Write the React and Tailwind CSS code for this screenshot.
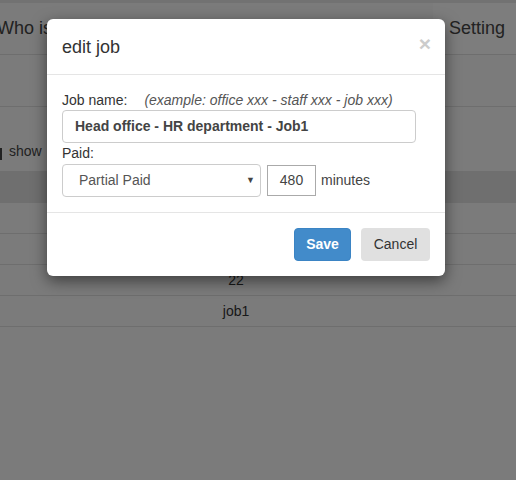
import React from 'react';

const font = { fontFamily: '"Liberation Sans", Arial, sans-serif' };

const App = () => {
  return (
    <div className="relative w-[516px] h-[480px] overflow-hidden bg-[#f6f6f6] text-[#333]" style={font}>
      {/* Page behind the modal */}
      <div className="h-[3px] bg-[#e4e4e4]" />
      <div className="flex h-[52px] border-b border-[#dddddd]">
        <div className="flex-1 flex items-center text-[18px] text-[#444] -ml-[3px]">Who is</div>
        <div className="w-[83px] bg-[#fafafa] flex items-center pl-[16px] text-[18px] text-[#444]">Setting</div>
      </div>
      <div className="h-[52px] border-b border-[#dddddd]" />
      <div className="h-[64px] flex items-end pb-[9px] text-[14px] text-[#444]">
        <span className="w-[2px] h-[12px] bg-[#444] mr-[7px] mb-[2px]" />
        <span>show</span>
      </div>
      <div className="h-[32px] bg-[#dedede]" />
      <div className="h-[31px] border-b border-[#dddddd]" />
      <div className="h-[31px] border-b border-[#dddddd]" />
      <div className="h-[31px] border-b border-[#dddddd] flex items-center">
        <span className="w-[472px] text-center text-[14px]">22</span>
      </div>
      <div className="h-[31px] border-b border-[#dddddd] flex items-center">
        <span className="w-[472px] text-center text-[14px]">job1</span>
      </div>

      {/* Backdrop */}
      <div className="absolute inset-0 bg-black/50" />

      {/* Modal */}
      <div className="absolute left-[47px] top-[19px] w-[398px] bg-white rounded-[6px] shadow-[0_5px_15px_rgba(0,0,0,0.5)]">
        <div className="flex items-center justify-between px-[15px] h-[56px] border-b border-[#e5e5e5]">
          <h4 className="text-[18px] text-[#333] leading-[26px]">edit job</h4>
          <span className="text-[21px] font-bold text-[#cccccc] leading-none -mr-[1px] -mt-[6px]">×</span>
        </div>

        <div className="px-[15px] pt-[15px] pb-[15px] text-[14px]">
          <div className="h-[20px] flex items-center">
            <span className="text-[#333]">Job name:</span>
            <span className="ml-[17px] italic text-[#555]">(example: office xxx - staff xxx - job xxx)</span>
          </div>
          <div className="w-[354px] h-[33px] border border-[#cccccc] rounded-[4px] flex items-center pl-[12px] font-bold text-[#444]">
            Head office - HR department - Job1
          </div>
          <div className="h-[21px] flex items-center text-[#333]">Paid:</div>
          <div className="flex items-center h-[33px]">
            <div className="w-[199px] h-[33px] border border-[#cccccc] rounded-[4px] flex items-center justify-between pl-[16px] pr-[5px] text-[#555]">
              <span>Partial Paid</span>
              <span className="text-[9px] text-[#444]">▼</span>
            </div>
            <div className="ml-[6px] w-[49px] h-[31px] border border-[#aaaaaa] flex items-center justify-center text-[#444]">480</div>
            <span className="ml-[5px] text-[#444]">minutes</span>
          </div>
        </div>

        <div className="flex justify-end gap-[10px] px-[15px] pt-[15px] pb-[15px] border-t border-[#e5e5e5]">
          <button className="w-[57px] h-[33px] bg-[#428bca] border border-[#3b84c4] rounded-[4px] text-white font-bold text-[14px]">Save</button>
          <button className="w-[69px] h-[33px] bg-[#e0e0e0] rounded-[4px] text-[#333] text-[14px]">Cancel</button>
        </div>
      </div>
    </div>
  );
};

export default App;
